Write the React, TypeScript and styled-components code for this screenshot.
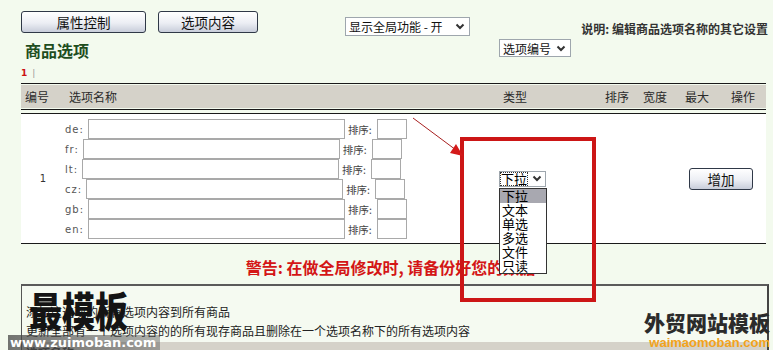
import styled, { createGlobalStyle } from "styled-components";

const GlobalStyle = createGlobalStyle`
  body {
    margin: 0;
    background: #f3faee;
    font-family: "Noto Sans CJK SC", "DejaVu Sans", sans-serif;
  }
`;

const langs = ["de", "fr", "lt", "cz", "gb", "en"];
const types = ["下拉", "文本", "单选", "多选", "文件", "只读"];
const columns = ["编号", "选项名称", "类型", "排序", "宽度", "最大", "操作"];

const Chevron = () => (
  <svg width="10" height="7" viewBox="0 0 10 7">
    <path d="M1.5 1.5 L5 5 L8.5 1.5" fill="none" stroke="#333" strokeWidth="2" />
  </svg>
);

const App = () => {
  return (
    <Page>
      <GlobalStyle />
      <TopBar>
        <NavButton $width={125}>属性控制</NavButton>
        <NavButton $width={100}>选项内容</NavButton>
        <SelectBox $width={125} $height={19} $ml={75} $mt={6}>
          显示全局功能 - 开 <Chevron />
        </SelectBox>
        <Info>说明: 编辑商品选项名称的其它设置</Info>
      </TopBar>

      <TitleRow>
        <Title>商品选项</Title>
        <SelectBox $width={72} $height={18}>
          选项编号 <Chevron />
        </SelectBox>
      </TitleRow>

      <Pager>
        <b>1</b> <span>|</span>
      </Pager>

      <Table>
        <Head>
          <HeaderRow>
            {columns.map((c) => (
              <HeadCell key={c}>{c}</HeadCell>
            ))}
          </HeaderRow>
        </Head>

        <BodyRow>
          <IdCell>1</IdCell>
          <NameCell>
            {langs.map((l) => (
              <LangRow key={l}>
                <LangLabel>{l}:</LangLabel>
                <NameInput readOnly />
                <SortLabel>排序:</SortLabel>
                <SortInput readOnly />
              </LangRow>
            ))}
          </NameCell>
          <TypeCell>
            <TypeHolder>
              <TypeSelect>
                <Focused>下拉</Focused>
                <Chevron />
              </TypeSelect>
              <TypeList>
                {types.map((t, i) => (
                  <TypeItem key={t} $active={i === 0}>
                    {t}
                  </TypeItem>
                ))}
              </TypeList>
            </TypeHolder>
          </TypeCell>
          <ActionCell>
            <NavButton $width={64}>增加</NavButton>
          </ActionCell>
        </BodyRow>

        <Warning>警告: 在做全局修改时, 请备份好您的数据!</Warning>
      </Table>

      <InfoBox>
        <BoxLine>添加这选项的所有选项内容到所有商品</BoxLine>
        <BoxLine>更新全部有一个选项内容的的所有现存商品且删除在一个选项名称下的所有选项内容</BoxLine>
        <BoxBar>选项名称</BoxBar>
      </InfoBox>

      <Annotation width="773" height="350">
        <rect x="462" y="139" width="132" height="161" fill="none" stroke="#cc1616" strokeWidth="4" />
        <line x1="413" y1="118" x2="456" y2="150" stroke="#a82020" strokeWidth="1" />
        <polygon points="463,156 450,153 456,144" fill="#d41a1a" />
      </Annotation>

      <MarkCn>最模板</MarkCn>
      <MarkUrl>www.zuimoban.com</MarkUrl>
      <MarkRight>
        <MarkRightCn>外贸网站模板</MarkRightCn>
        <MarkRightUrl>waimaomoban.com</MarkRightUrl>
      </MarkRight>
    </Page>
  );
};

const Page = styled.div`
  position: relative;
  width: 773px;
  height: 350px;
  overflow: hidden;
`;

const TopBar = styled.div`
  display: flex;
  align-items: flex-start;
  height: 39px;
  box-sizing: border-box;
  padding: 11px 5px 0 21px;
`;

const NavButton = styled.div<{ $width: number }>`
  width: ${(p) => p.$width}px;
  height: 22px;
  box-sizing: border-box;
  margin-right: 12px;
  border: 1px solid #2f3847;
  border-radius: 3px;
  background: linear-gradient(#ffffff, #eceef4 55%, #c8cdda);
  color: #111;
  font-size: 13.5px;
  line-height: 20px;
  text-align: center;

  &:last-child {
    margin-right: 0;
  }
`;

const SelectBox = styled.div<{ $width: number; $height: number; $ml?: number; $mt?: number }>`
  width: ${(p) => p.$width}px;
  height: ${(p) => p.$height}px;
  margin-left: ${(p) => p.$ml ?? 0}px;
  margin-top: ${(p) => p.$mt ?? 0}px;
  box-sizing: border-box;
  border: 1px solid #9ea6ad;
  background: #fff;
  color: #111;
  font-size: 12px;
  display: flex;
  align-items: center;
  justify-content: space-between;
  padding: 0 4px 0 3px;
  white-space: nowrap;
`;

const Info = styled.div`
  margin-left: auto;
  margin-top: 9px;
  font-size: 12px;
  font-weight: bold;
  color: #333;
`;

const TitleRow = styled.div`
  display: flex;
  height: 24px;
  padding-left: 25px;
`;

const Title = styled.div`
  flex: 0 0 474px;
  margin-top: 1px;
  font-size: 16px;
  line-height: 20px;
  font-weight: bold;
  color: #1e4d1e;
`;

const Pager = styled.div`
  height: 20px;
  box-sizing: border-box;
  padding: 3px 0 0 21px;
  font-family: "DejaVu Sans", sans-serif;
  font-size: 9px;
  line-height: 14px;

  b {
    color: #cc1111;
  }

  span {
    color: #999;
    margin-left: 2px;
  }
`;

const Table = styled.div`
  margin-left: 21px;
  width: 745px;
`;

const Head = styled.div`
  border-top: 1px solid #1a1a1a;
  border-bottom: 1px solid #1a1a1a;
  padding: 1px 0;
`;

const grid = `
  display: grid;
  grid-template-columns: 44px 434px 102px 38px 42px 46px 1fr;
`;

const HeaderRow = styled.div`
  ${grid}
  height: 23px;
  align-items: center;
  background: #d5d2c9;
`;

const HeadCell = styled.div`
  padding-left: 4px;
  font-size: 12px;
  color: #2a2a2a;
`;

const BodyRow = styled.div`
  ${grid}
  margin-top: 3px;
  border-top: 1px solid #1a1a1a;
  border-bottom: 1px solid #1a1a1a;
  background: #fff;
`;

const IdCell = styled.div`
  display: flex;
  align-items: center;
  justify-content: center;
  font-family: "DejaVu Sans", sans-serif;
  font-size: 10px;
  color: #333;
`;

const NameCell = styled.div`
  display: flex;
  flex-direction: column;
  padding: 5px 0 4px;
`;

const LangRow = styled.div`
  display: flex;
  align-items: center;
  height: 20px;
`;

const LangLabel = styled.span`
  margin-right: 4px;
  font-family: "DejaVu Sans", sans-serif;
  font-size: 10px;
  letter-spacing: 1px;
  color: #555;
`;

const NameInput = styled.input`
  width: 257px;
  height: 20px;
  box-sizing: border-box;
  margin: 0;
  padding: 0;
  border: 1px solid #a9a9a9;
  background: #fff;
`;

const SortLabel = styled.span`
  margin: 0 5px 0 3px;
  font-size: 10.5px;
  color: #444;
`;

const SortInput = styled(NameInput)`
  width: 30px;
`;

const TypeCell = styled.div`
  display: flex;
  align-items: center;
`;

const TypeHolder = styled.div`
  position: relative;
`;

const TypeSelect = styled.div`
  width: 47px;
  height: 16px;
  box-sizing: border-box;
  border: 1px solid #9ea6ad;
  background: #fff;
  display: flex;
  align-items: center;
  justify-content: space-between;
  padding: 0 3px 0 0;
`;

const Focused = styled.span`
  outline: 1px dotted #333;
  outline-offset: -1px;
  font-size: 13px;
  line-height: 14px;
  padding: 0 1px;
  color: #000;
`;

const TypeList = styled.div`
  position: absolute;
  top: 17px;
  left: 0;
  z-index: 4;
  width: 48px;
  box-sizing: border-box;
  border: 1px solid #333;
  background: #fff;
`;

const TypeItem = styled.div<{ $active: boolean }>`
  height: 14px;
  padding-left: 2px;
  font-size: 13px;
  line-height: 14px;
  color: #000;
  background: ${(p) => (p.$active ? "#a8a8b0" : "#fff")};
`;

const ActionCell = styled.div`
  grid-column: 4 / 8;
  display: flex;
  align-items: center;
  justify-content: flex-end;
  padding-right: 13px;
`;

const Warning = styled.div`
  height: 40px;
  box-sizing: border-box;
  padding-top: 13px;
  text-align: center;
  font-size: 16px;
  line-height: 20px;
  font-weight: bold;
  color: #d41616;
`;

const InfoBox = styled.div`
  margin-left: 21px;
  width: 748px;
  box-sizing: border-box;
  padding-top: 16px;
  border-top: 2px solid #5a5a5a;
  border-left: 1px solid #555;
  border-right: 2px solid #444;
  background: #f5faf1;
`;

const BoxLine = styled.div`
  padding-left: 4px;
  font-size: 12px;
  line-height: 19px;
  color: #222;
`;

const BoxBar = styled.div`
  margin-top: 2px;
  height: 22px;
  padding-left: 4px;
  background: #d5d2c9;
  font-size: 12px;
  font-weight: bold;
  line-height: 22px;
  color: #333;
`;

const Annotation = styled.svg`
  position: absolute;
  top: 0;
  left: 0;
  z-index: 3;
  pointer-events: none;
`;

const MarkCn = styled.div`
  position: absolute;
  left: 29px;
  top: 284px;
  z-index: 5;
  font-size: 33px;
  font-weight: 900;
  line-height: 40px;
  color: #141414;
  transform: scaleY(1.25);
  transform-origin: top left;
`;

const MarkUrl = styled.div`
  position: absolute;
  left: 8px;
  top: 335px;
  z-index: 5;
  width: 150px;
  height: 15px;
  padding-left: 2px;
  background: linear-gradient(to right, rgba(70, 70, 70, 0.75), rgba(90, 90, 90, 0.45));
  font-family: "DejaVu Sans", sans-serif;
  font-size: 13px;
  font-weight: bold;
  line-height: 15px;
  color: #fff;
`;

const MarkRight = styled.div`
  position: absolute;
  right: 3px;
  top: 309px;
  z-index: 5;
  display: flex;
  flex-direction: column;
  align-items: flex-end;
`;

const MarkRightCn = styled.div`
  font-size: 21px;
  font-weight: 900;
  line-height: 27px;
  color: #2b2b2b;
`;

const MarkRightUrl = styled.div`
  font-family: "Liberation Sans", sans-serif;
  font-size: 13px;
  font-weight: bold;
  line-height: 14px;
  color: #f2a31b;
`;

export default App;
